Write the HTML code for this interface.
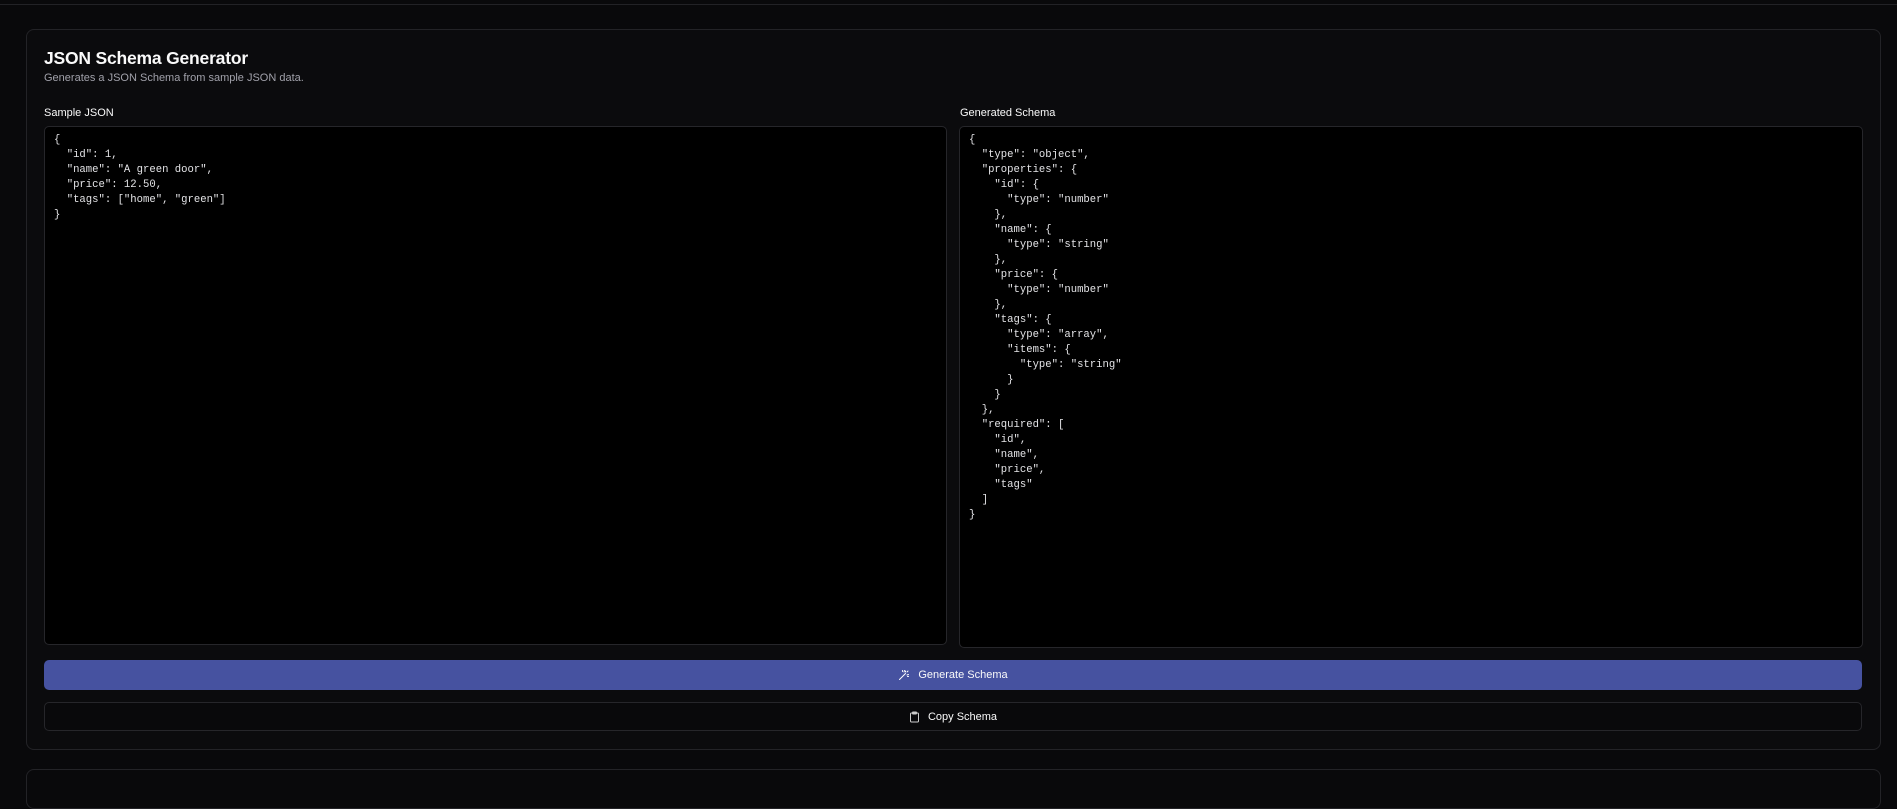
<!DOCTYPE html>
<html><head><style>
*{box-sizing:border-box;margin:0;padding:0}
body{width:1897px;height:774px;background:#09090b;font-family:"Liberation Sans",sans-serif;color:#fafafa;overflow:hidden;position:relative}
.top{position:absolute;left:0;right:0;top:4px;border-top:1px solid #222226}
.card{position:absolute;left:26px;top:29px;width:1855px;height:721px;border:1px solid #232327;border-radius:8px;background:#0b0b0d}
.card2{position:absolute;left:26px;top:769px;width:1855px;height:40px;border:1px solid #232327;border-radius:8px}
h1{position:absolute;left:17px;top:18px;font-size:17.5px;font-weight:700;letter-spacing:-0.2px}
.sub{position:absolute;left:17px;top:42px;font-size:11px;color:#a1a1aa}
.lbl{position:absolute;top:77px;font-size:11px;font-weight:500}
.ta{position:absolute;top:96px;background:#000;border:1px solid #26262a;border-radius:5px;font-family:"Liberation Mono",monospace;font-size:10.6px;line-height:15px;white-space:pre;padding:6px 9px;color:#e4e4e7}
.btn{position:absolute;left:17px;width:1818px;height:30px;border-radius:5px;display:flex;align-items:center;justify-content:center;font-size:11px;gap:8px}
.g{top:630px;background:#4652a0}
.c{top:672px;height:29px;border:1px solid #26262a;background:#09090b}
</style></head><body>
<div class="top"></div>
<div class="card">
<h1>JSON Schema Generator</h1>
<div class="sub">Generates a JSON Schema from sample JSON data.</div>
<div class="lbl" style="left:17px">Sample JSON</div>
<div class="lbl" style="left:933px">Generated Schema</div>
<div class="ta" style="left:17px;width:903px;height:519px">{
  "id": 1,
  "name": "A green door",
  "price": 12.50,
  "tags": ["home", "green"]
}</div>
<div class="ta" style="left:932px;width:904px;height:522px">{
  "type": "object",
  "properties": {
    "id": {
      "type": "number"
    },
    "name": {
      "type": "string"
    },
    "price": {
      "type": "number"
    },
    "tags": {
      "type": "array",
      "items": {
        "type": "string"
      }
    }
  },
  "required": [
    "id",
    "name",
    "price",
    "tags"
  ]
}</div>
<div class="btn g"><svg width="12" height="12" viewBox="0 0 24 24" fill="none" stroke="#fff" stroke-width="2" stroke-linecap="round"><path d="M3 21 15 9M12 6l1-3M18 12l3-1M18 6l2-2M9 3v2M21 15h-2M15 4v2"/></svg>Generate Schema</div>
<div class="btn c"><svg width="11" height="12" viewBox="0 0 20 24" fill="none" stroke="#ccc" stroke-width="2"><rect x="2" y="4" width="16" height="18" rx="2"/><rect x="6" y="2" width="8" height="4" rx="1"/></svg>Copy Schema</div>
</div>
<div class="card2"></div>
</body></html>
